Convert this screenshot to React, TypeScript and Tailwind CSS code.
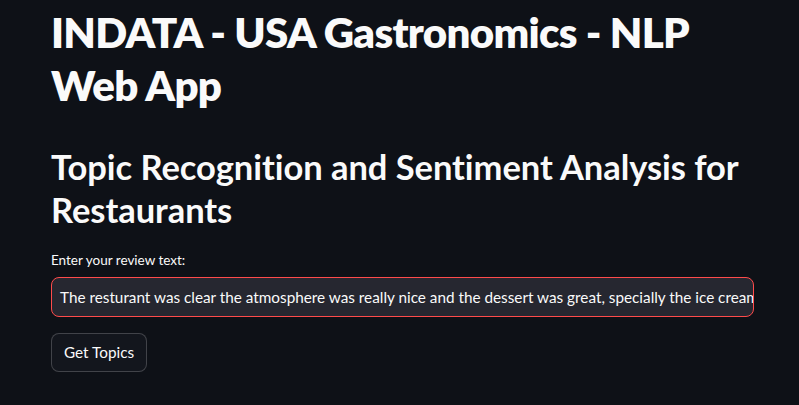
export default function App() {
  return (
    <div
      className="min-h-[405px] w-full bg-[#0e1117] text-[#fafafa]"
      style={{ fontFamily: "Lato, 'Noto Sans', sans-serif" }}
    >
      <div className="pl-[51px] pr-[45px] pt-[6px]">
        <h1 className="text-[42px] font-extrabold leading-[53px] tracking-[-0.7px]">
          INDATA - USA Gastronomics - NLP Web App
        </h1>

        <h2 className="mt-[33px] text-[34.5px] font-bold leading-[43px] tracking-[-0.05px]">
          Topic Recognition and Sentiment Analysis for Restaurants
        </h2>

        <div className="mt-[21px]">
          <label className="block text-[13.5px] leading-[16px] mb-[9px]">
            Enter your review text:
          </label>
          <div className="h-[40px] w-[703px] rounded-[8px] border border-[#ff4b4b] bg-[#262730] flex items-center px-[8px] overflow-hidden">
            <span className="whitespace-nowrap text-[15.3px]">
              The resturant was clear the atmosphere was really nice and the dessert was great, specially the ice cream
            </span>
          </div>
        </div>

        <button className="mt-[16px] h-[39px] rounded-[8px] border border-[#fafafa]/20 bg-[#13161d] px-[12px] text-[15.3px] text-[#fafafa]">
          Get Topics
        </button>
      </div>
    </div>
  );
}
